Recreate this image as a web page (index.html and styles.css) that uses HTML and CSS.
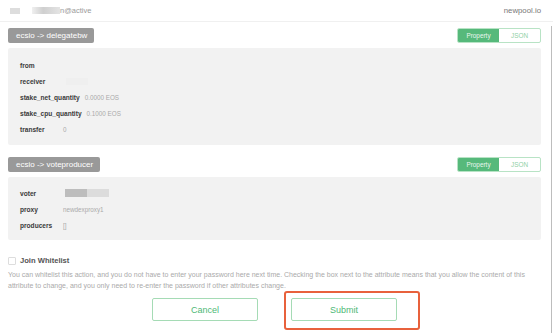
FILE: index.html
```html
<!DOCTYPE html>
<html lang="en">
<head>
  <meta charset="UTF-8">
  <title>Sign transaction</title>
  <link rel="stylesheet" href="styles.css">
</head>
<body>
  <div class="page">
    <header class="top">
      <div class="account">
        <span class="mask mask-a"></span>
        <span class="mask mask-b"></span>
        <span class="perm">n@active</span>
      </div>
      <span class="origin">newpool.io</span>
    </header>

    <section class="action">
      <div class="action-head">
        <span class="tag">ecsio -&gt; delegatebw</span>
        <div class="toggle">
          <span class="opt on">Property</span>
          <span class="opt">JSON</span>
        </div>
      </div>
      <div class="panel">
        <div class="row"><span class="key">from</span><span class="val"></span></div>
        <div class="row"><span class="key">receiver</span><span class="val"><span class="mask mask-faint"></span></span></div>
        <div class="row"><span class="key">stake_net_quantity</span><span class="val">0.0000 EOS</span></div>
        <div class="row"><span class="key">stake_cpu_quantity</span><span class="val">0.1000 EOS</span></div>
        <div class="row"><span class="key">transfer</span><span class="val">0</span></div>
      </div>
    </section>

    <section class="action">
      <div class="action-head">
        <span class="tag">ecsio -&gt; voteproducer</span>
        <div class="toggle">
          <span class="opt on">Property</span>
          <span class="opt">JSON</span>
        </div>
      </div>
      <div class="panel panel-short">
        <div class="row"><span class="key">voter</span><span class="val"><span class="mask mask-dark"></span><span class="mask mask-light"></span></span></div>
        <div class="row"><span class="key">proxy</span><span class="val">newdexproxy1</span></div>
        <div class="row"><span class="key">producers</span><span class="val">[]</span></div>
      </div>
    </section>

    <label class="whitelist">
      <span class="box"></span>
      <span>Join Whitelist</span>
    </label>
    <p class="note">You can whitelist this action, and you do not have to enter your password here next time. Checking the box next to the attribute means that you allow the content of this attribute to change, and you only need to re-enter the password if other attributes change.</p>

    <div class="actions">
      <button class="btn">Cancel</button>
      <div class="marked">
        <button class="btn">Submit</button>
        <span class="highlight"></span>
      </div>
    </div>
  </div>
  <div class="edge"></div>
</body>
</html>
```

FILE: styles.css
```css
body { margin: 0; background: #fff; font-family: 'Liberation Sans', Arial, sans-serif; color: #333; overflow: hidden; }
.page { padding: 0 12px 12px 8px; }

.top { display: flex; justify-content: space-between; align-items: center; height: 21px; border-bottom: 1px solid #f0f0f0; margin: 0 -12px 0 -8px; padding: 0 12px 0 10px; font-size: 7.5px; }
.account { display: flex; align-items: center; color: #999; }
.perm { color: #9a9a9a; }
.origin { color: #777; font-size: 7.8px; }
.mask { display: inline-block; height: 7px; }
.mask-a { width: 10px; height: 6px; background: #ddd; margin-right: 12px; }
.mask-b { width: 28px; background: linear-gradient(90deg, #f0f0f0, #cfcfcf 40%, #e4e4e4); }
.mask-faint { width: 22px; background: #efefef; vertical-align: middle; margin-left: 3px; }
.mask-dark { width: 22px; height: 8px; background: #bdbdbd; vertical-align: middle; margin-left: 2px; }
.mask-light { width: 22px; height: 8px; background: #dcdcdc; vertical-align: middle; }

.action { margin-top: 6px; }
.action + .action { margin-top: 12px; }
.action-head { display: flex; justify-content: space-between; align-items: center; height: 15px; }
.tag { background: #999; color: #fff; font-size: 8px; line-height: 15px; padding: 0 7px 0 8px; border-radius: 2px; }
.toggle { display: flex; height: 15px; border: 1px solid #b8e3c5; border-radius: 2px; box-sizing: border-box; overflow: hidden; }
.opt { width: 41px; text-align: center; font-size: 6.4px; line-height: 13px; color: #8fcfa5; }
.opt.on { background: #56b97b; color: #e9f7ee; }

.panel { background: #f2f2f2; margin-top: 5px; padding: 9px 12px 8px; border-radius: 2px; }
.panel-short { padding: 8px 12px 7px; }
.row { display: flex; gap: 5px; height: 16px; align-items: center; }
.key { min-width: 38px; font-size: 6.6px; font-weight: bold; color: #3a3a3a; }
.val { display: flex; font-size: 6.3px; color: #aaa; }

.whitelist { display: flex; align-items: center; gap: 4px; margin-top: 13px; height: 15px; font-size: 7.6px; font-weight: bold; color: #555; }
.box { width: 6px; height: 6px; border: 1px solid #ddd; border-radius: 1px; background: #fff; }
.note { margin: 1px 0 0; font-size: 7px; line-height: 11px; color: #aaa; }

.actions { display: flex; justify-content: center; gap: 33px; margin-top: 7px; }
.marked { position: relative; }
.btn { display: block; width: 106px; height: 23px; border: 1px solid #a5dbb5; border-radius: 2px; background: #fff; color: #4eb876; font-family: inherit; font-size: 9px; padding: 0; }
.highlight { position: absolute; left: -7px; top: -7px; width: 136px; height: 39px; border: 2px solid #e8613c; border-radius: 3px; box-sizing: border-box; }

.edge { position: fixed; right: 1px; top: 26px; bottom: 0; width: 1px; background: #bdbdbd; }
```
